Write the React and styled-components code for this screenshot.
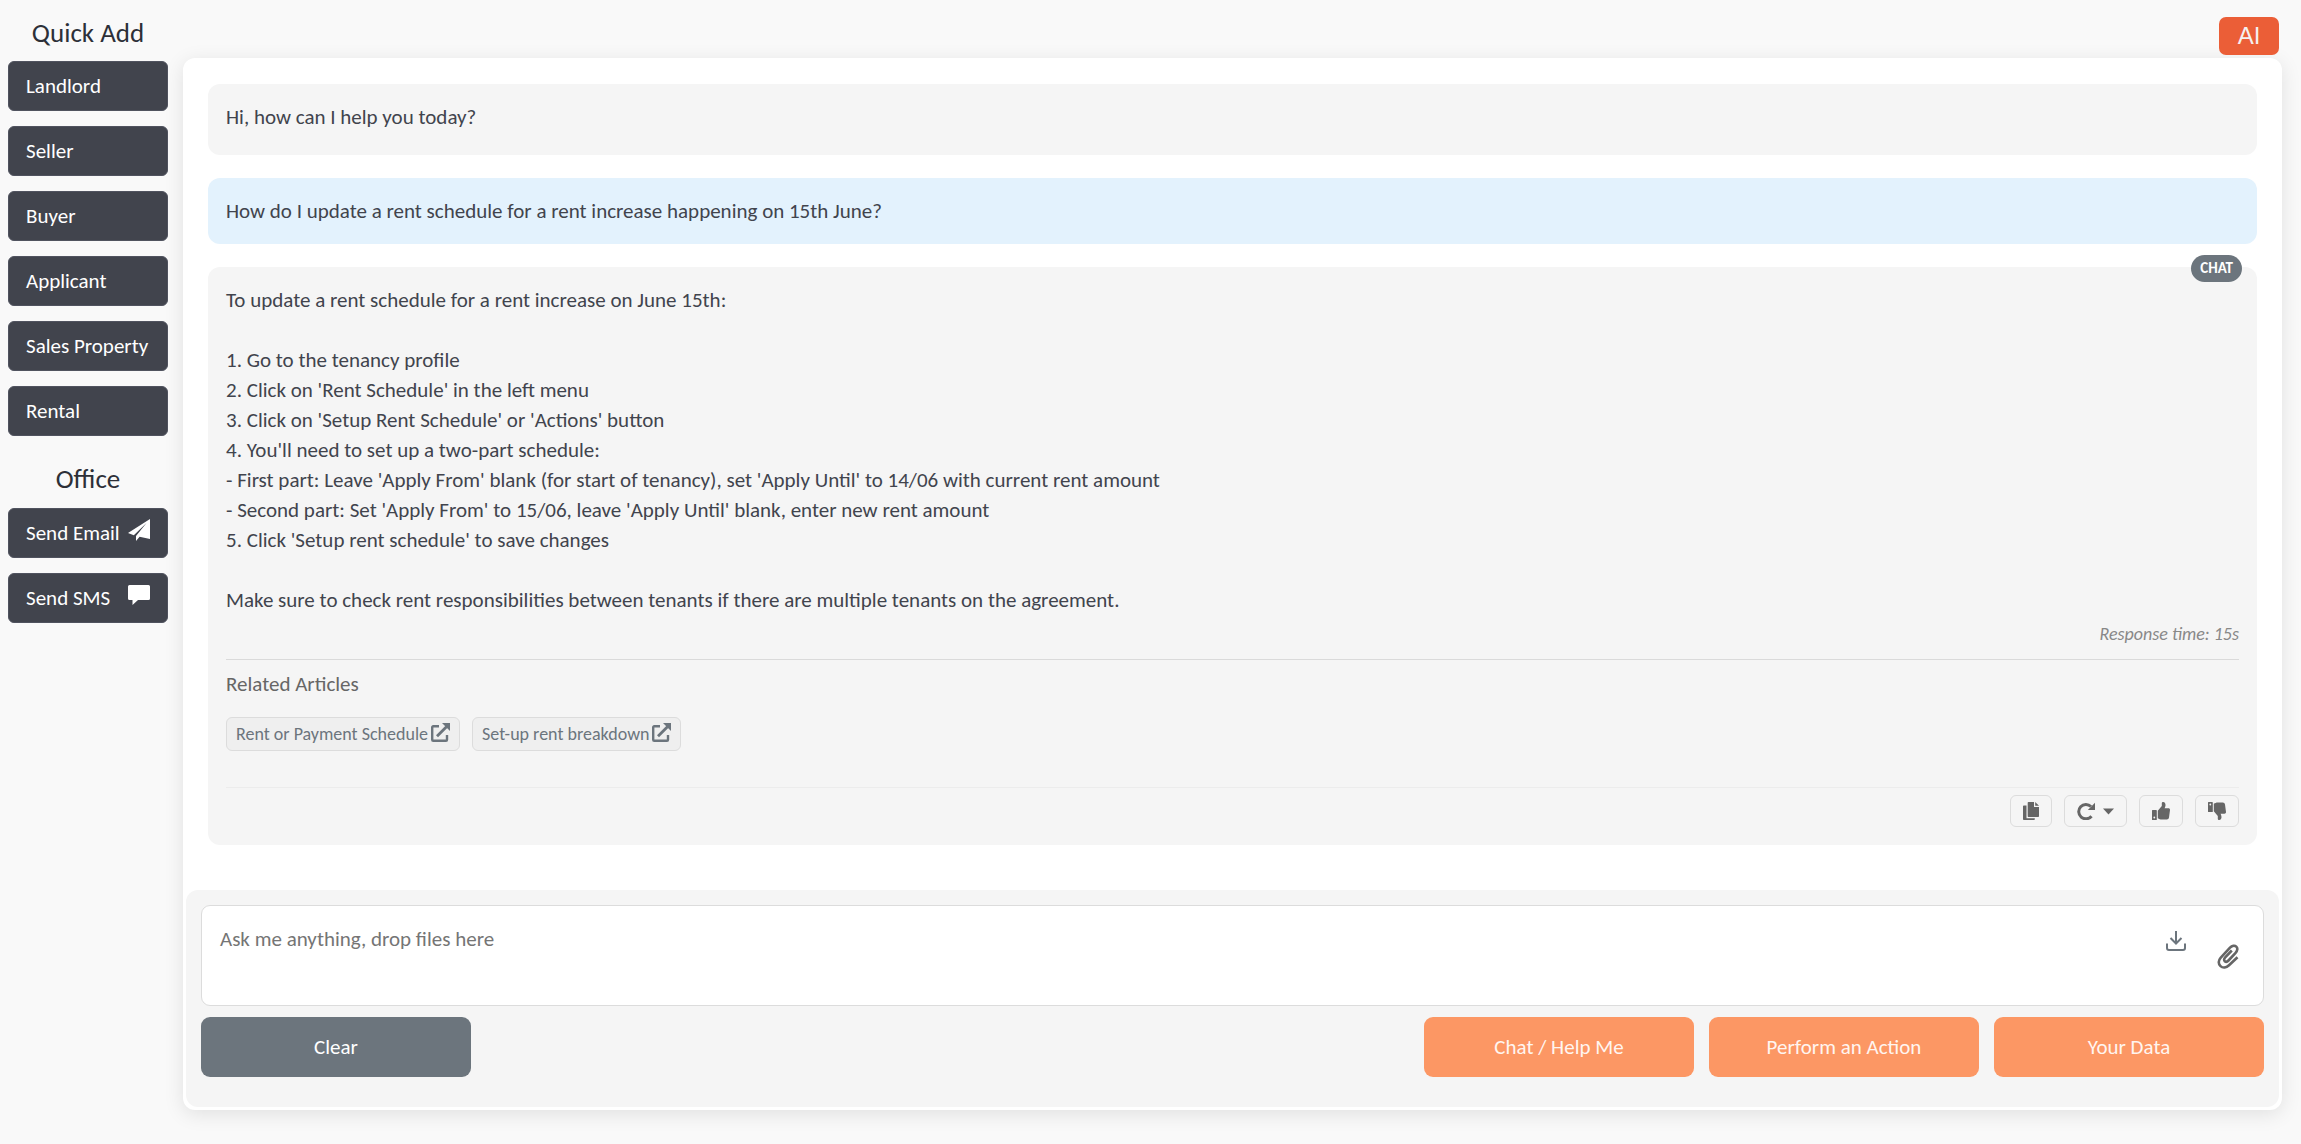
import React from "react";
import styled, { createGlobalStyle, css } from "styled-components";

const GlobalStyle = createGlobalStyle`
  *, *::before, *::after { box-sizing: border-box; }
  body {
    margin: 0;
    background: #f9f9f9;
    color: #41444d;
    font-family: Calibri, Carlito, Lato, sans-serif;
    font-size: 21px;
    line-height: 30px;
  }
  button, textarea { font: inherit; }
  h2, h3, p { margin: 0; font-weight: 400; }
`;

const Layout = styled.div`
  display: flex;
  align-items: flex-start;
  gap: 15px;
  padding: 17px 19px 35px 8px;
`;

const Sidebar = styled.nav`
  flex: 0 0 160px;
  display: flex;
  flex-direction: column;
  gap: 15px;
`;

const SidebarTitle = styled.h2`
  font-size: 27px;
  line-height: 32px;
  text-align: center;
  color: #2d3038;
  margin: ${(p) => (p.$spaced ? "12px 0 -2px" : "0 0 -3px")};
`;

const SidebarButton = styled.button`
  display: flex;
  align-items: center;
  justify-content: space-between;
  height: 50px;
  padding: 0 17px;
  border: 1px solid #50535f;
  border-radius: 6px;
  background: #41444d;
  color: #fff;
  white-space: nowrap;
  cursor: pointer;
  svg { margin-bottom: 6px; }
`;

const Content = styled.main`
  flex: 1;
  min-width: 0;
`;

const TopBar = styled.header`
  display: flex;
  justify-content: flex-end;
  padding: 0 3px 3px;
`;

const AiButton = styled.button`
  width: 60px;
  height: 38px;
  padding: 0;
  border: 0;
  border-radius: 7px;
  background: #eb5e37;
  color: #f5f0f0;
  font-family: "Liberation Sans", Arial, sans-serif;
  font-size: 24px;
  cursor: pointer;
`;

const Card = styled.section`
  padding: 26px 3px 3px;
  border-radius: 12px;
  background: #fff;
  box-shadow: 0 4px 20px rgba(0, 0, 0, 0.1);
`;

const Messages = styled.div`
  display: flex;
  flex-direction: column;
  gap: 23px;
  padding: 0 22px 45px;
`;

const Message = styled.article`
  position: relative;
  padding: 18px;
  border-radius: 12px;
  background: ${(p) => (p.$mine ? "#e3f2fd" : "#f5f5f5")};
  ${(p) => p.$greeting && css`padding-bottom: 23px;`}
`;

const MessageText = styled.p`
  white-space: pre-line;
`;

const ModeBadge = styled.span`
  position: absolute;
  top: -12px;
  right: 15px;
  padding: 0 9px;
  border-radius: 14px;
  background: #6c757d;
  color: #fff;
  font-size: 15px;
  font-weight: 700;
  line-height: 27px;
`;

const ResponseTime = styled.p`
  padding: 6px 0 12px;
  font-size: 18px;
  font-style: italic;
  line-height: 26px;
  text-align: right;
  color: #888;
`;

const Related = styled.section`
  padding: 9px 0 36px;
  border-top: 1px solid #dadada;
`;

const RelatedTitle = styled.h3`
  font-size: 21px;
  color: #666;
`;

const RelatedLinks = styled.div`
  display: flex;
  gap: 12px;
  margin-top: 18px;
`;

const RelatedLink = styled.a`
  display: flex;
  align-items: center;
  gap: 3px;
  height: 34px;
  padding: 0 9px;
  border: 1px solid #dcdcdc;
  border-radius: 6px;
  background: #efefef;
  color: #6c757d;
  font-size: 18px;
  text-decoration: none;
  svg { margin-bottom: 3px; }
`;

const Actions = styled.footer`
  display: flex;
  justify-content: flex-end;
  gap: 12px;
  padding-top: 7px;
  border-top: 1px solid #ececec;
`;

const IconButton = styled.button`
  display: flex;
  align-items: center;
  justify-content: center;
  gap: 8px;
  height: 32px;
  padding: 0 12px;
  border: 1px solid #dcdcdc;
  border-radius: 6px;
  background: transparent;
  color: #666;
  cursor: pointer;
`;

const Composer = styled.form`
  padding: 15px 15px 30px;
  border-radius: 12px;
  background: #f5f5f5;
`;

const InputBox = styled.div`
  display: flex;
  min-height: 101px;
  border: 1px solid #dcdcdc;
  border-radius: 9px;
  background: #fff;
`;

const Prompt = styled.textarea`
  flex: 1;
  min-width: 0;
  padding: 18px;
  border: 0;
  outline: 0;
  resize: none;
  background: transparent;
  color: #41444d;
  &::placeholder { color: #757575; opacity: 1; }
`;

const InputTools = styled.div`
  display: flex;
  align-items: flex-start;
  gap: 30px;
  padding: 24px 24px 0 0;
`;

const ToolButton = styled.button`
  display: flex;
  padding: ${(p) => (p.$low ? "14px 0 0" : "0")};
  border: 0;
  background: none;
  color: ${(p) => (p.$low ? "#666" : "#6c757d")};
  cursor: pointer;
`;

const ComposerButtons = styled.div`
  display: flex;
  gap: 15px;
  margin-top: 11px;
`;

const ComposerButton = styled.button`
  width: 270px;
  height: 60px;
  border: 0;
  border-radius: 9px;
  background: ${(p) => (p.$muted ? "#6c757d" : "#fc9764")};
  color: ${(p) => (p.$muted ? "#fff" : "#fff5f0")};
  cursor: pointer;
  ${(p) => p.$muted && css`margin-right: auto;`}
`;

const SendIcon = () => (
  <svg width="22" height="22" viewBox="0 0 22 22" fill="currentColor" aria-hidden="true">
    <path d="M22 0 0 14l5.800 2.200L18.500 4 8 17v5l3.600-4.200L22 20z" />
  </svg>
);

const CommentIcon = () => (
  <svg width="22" height="20" viewBox="0 0 22 20" fill="currentColor" aria-hidden="true">
    <path d="M1.500 0h19A1.500 1.500 0 0 1 22 1.500v12a1.500 1.500 0 0 1-1.500 1.500H10l-5.500 5v-5h-3A1.500 1.500 0 0 1 0 13.500v-12A1.500 1.500 0 0 1 1.500 0z" />
  </svg>
);

const OpenIcon = () => (
  <svg width="19" height="19" viewBox="0 0 19 19" fill="none" stroke="currentColor" strokeWidth="2.400" aria-hidden="true">
    <path d="M8 3.200H2.200a1 1 0 0 0-1 1v12.600a1 1 0 0 0 1 1H15a1 1 0 0 0 1-1V12" />
    <path d="M6 13.200 15.500 3.700" strokeWidth="2.800" />
    <path d="M11 0h8v8z" fill="currentColor" stroke="none" />
  </svg>
);

const CopyIcon = () => (
  <svg width="16" height="18" viewBox="0 0 16 18" fill="currentColor" aria-hidden="true">
    <path d="M5.500 0H11v5h5v9.200a.8.800 0 0 1-.8.800H5.500a.8.800 0 0 1-.8-.8V.8a.8.800 0 0 1 .8-.8z" />
    <path d="M12.200 0 16 3.800h-3.800z" />
    <path d="M.8 3.500h2.700v12.700h8.300v1a.8.800 0 0 1-.8.800H.8a.8.800 0 0 1-.8-.8V4.300a.8.800 0 0 1 .8-.8z" />
  </svg>
);

const RepeatIcon = () => (
  <svg width="18" height="18" viewBox="0 0 18 18" fill="none" stroke="currentColor" strokeWidth="3" aria-hidden="true">
    <path d="M14 4.500A7.200 7.200 0 1 0 14.500 14.200" />
    <path d="M18 .8V8h-7.200z" fill="currentColor" stroke="none" />
  </svg>
);

const CaretIcon = () => (
  <svg width="11" height="7" viewBox="0 0 11 7" fill="currentColor" aria-hidden="true">
    <path d="M0 .5h11L5.500 6.500z" />
  </svg>
);

const ThumbIcon = ({ down }) => (
  <svg width="18" height="18" viewBox="0 0 18 18" fill="currentColor" aria-hidden="true">
    <g transform={down ? "matrix(1 0 0 -1 0 18)" : undefined}>
      <path fillRule="evenodd" d="M.6 8h3.600a.6.600 0 0 1 .6.600V17.400a.6.600 0 0 1-.6.600H.6a.6.600 0 0 1-.6-.6V8.600A.6.600 0 0 1 .6 8zM2.300 14.600a.9.900 0 1 0 0 1.800.9.900 0 0 0 0-1.800z" />
      <path d="M5.800 8.800 9.800 4V1.200C9.800.4 10.400 0 11.200 0c1.700 0 2.300 1.600 2.300 3 0 1.300-.5 2.300-.9 3.300H16.500c1 0 1.600.8 1.500 1.800l-1 7.500c-.2 1.200-1 2-2.200 2H9.500c-1.300 0-2.200-.6-3.700-1.400z" />
    </g>
  </svg>
);

const DownloadIcon = () => (
  <svg width="22" height="22" viewBox="0 0 22 22" fill="none" stroke="currentColor" strokeWidth="2" aria-hidden="true">
    <path d="M11 1v12M5.500 8l5.500 5.500L16.500 8M2 13.500V18a2 2 0 0 0 2 2h14a2 2 0 0 0 2-2v-4.500" />
  </svg>
);

const ClipIcon = () => (
  <svg width="22" height="25" viewBox="0 0 22 25" fill="none" stroke="currentColor" strokeWidth="2.600" strokeLinecap="butt" strokeLinejoin="round" aria-hidden="true">
    <path d="M20.500 13.200 12 21.300c-2.700 2.500-6.100 3-8.500.8s-2.300-5.700.3-8.500L13 3.700c2-2.100 4.700-2.600 6.300-1.100s1.300 4.100-.7 6.200L11.500 16.500c-1.200 1.300-2.700 1.600-3.700.7s-.9-2.400.4-3.800L14.800 6.500" />
  </svg>
);

const quickAdd = ["Landlord", "Seller", "Buyer", "Applicant", "Sales Property", "Rental"];

const answer = `To update a rent schedule for a rent increase on June 15th:

1. Go to the tenancy profile
2. Click on 'Rent Schedule' in the left menu
3. Click on 'Setup Rent Schedule' or 'Actions' button
4. You'll need to set up a two-part schedule:
- First part: Leave 'Apply From' blank (for start of tenancy), set 'Apply Until' to 14/06 with current rent amount
- Second part: Set 'Apply From' to 15/06, leave 'Apply Until' blank, enter new rent amount
5. Click 'Setup rent schedule' to save changes

Make sure to check rent responsibilities between tenants if there are multiple tenants on the agreement.`;

export default function App() {
  return (
    <>
      <GlobalStyle />
      <Layout>
        <Sidebar>
          <SidebarTitle>Quick Add</SidebarTitle>
          {quickAdd.map((label) => (
            <SidebarButton key={label} type="button">{label}</SidebarButton>
          ))}
          <SidebarTitle $spaced>Office</SidebarTitle>
          <SidebarButton type="button">Send Email<SendIcon /></SidebarButton>
          <SidebarButton type="button">Send SMS<CommentIcon /></SidebarButton>
        </Sidebar>
        <Content>
          <TopBar>
            <AiButton type="button">AI</AiButton>
          </TopBar>
          <Card>
            <Messages>
              <Message $greeting>
                <MessageText>Hi, how can I help you today?</MessageText>
              </Message>
              <Message $mine>
                <MessageText>How do I update a rent schedule for a rent increase happening on 15th June?</MessageText>
              </Message>
              <Message>
                <ModeBadge>CHAT</ModeBadge>
                <MessageText>{answer}</MessageText>
                <ResponseTime>Response time: 15s</ResponseTime>
                <Related>
                  <RelatedTitle>Related Articles</RelatedTitle>
                  <RelatedLinks>
                    <RelatedLink href="#payment-schedule">Rent or Payment Schedule<OpenIcon /></RelatedLink>
                    <RelatedLink href="#rent-breakdown">Set-up rent breakdown<OpenIcon /></RelatedLink>
                  </RelatedLinks>
                </Related>
                <Actions>
                  <IconButton type="button" aria-label="Copy"><CopyIcon /></IconButton>
                  <IconButton type="button" aria-label="Retry"><RepeatIcon /><CaretIcon /></IconButton>
                  <IconButton type="button" aria-label="Helpful"><ThumbIcon /></IconButton>
                  <IconButton type="button" aria-label="Not helpful"><ThumbIcon down /></IconButton>
                </Actions>
              </Message>
            </Messages>
            <Composer onSubmit={(e) => e.preventDefault()}>
              <InputBox>
                <Prompt rows={2} aria-label="Message" placeholder="Ask me anything, drop files here" />
                <InputTools>
                  <ToolButton type="button" aria-label="Download"><DownloadIcon /></ToolButton>
                  <ToolButton type="button" aria-label="Attach a file" $low><ClipIcon /></ToolButton>
                </InputTools>
              </InputBox>
              <ComposerButtons>
                <ComposerButton type="reset" $muted>Clear</ComposerButton>
                <ComposerButton type="submit">Chat / Help Me</ComposerButton>
                <ComposerButton type="submit">Perform an Action</ComposerButton>
                <ComposerButton type="submit">Your Data</ComposerButton>
              </ComposerButtons>
            </Composer>
          </Card>
        </Content>
      </Layout>
    </>
  );
}
